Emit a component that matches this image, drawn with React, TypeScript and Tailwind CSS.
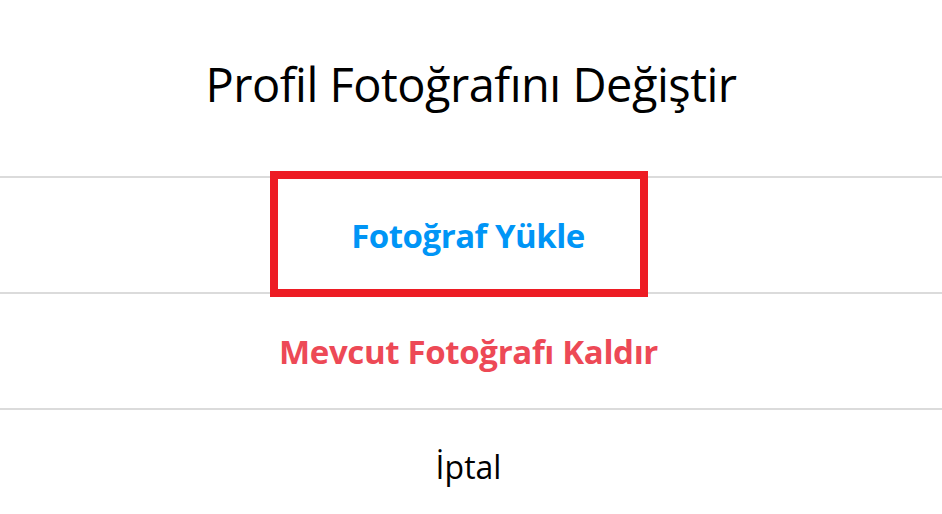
import React from "react";

export default function App() {
  const font = { fontFamily: '"Open Sans", "Noto Sans", sans-serif' };
  return (
    <div className="w-[942px] h-[514px] overflow-hidden bg-white" style={font}>
      <div className="h-[176px] flex items-center justify-center pb-[8px]">
        <h1 className="text-[47px] leading-none text-black font-normal tracking-[-0.5px]">
          Profil Fotoğrafını Değiştir
        </h1>
      </div>
      <div className="relative h-[116px] border-t-2 border-[#dbdbdb] flex items-center justify-center pr-[6px]">
        <span className="text-[33px] font-bold text-[#0095f6] leading-none tracking-[-0.5px]">
          Fotoğraf Yükle
        </span>
        <div className="absolute left-[270px] top-[-7px] w-[378px] h-[126px] border-[8px] border-[#ed1c24]" />
      </div>
      <div className="h-[116px] border-t-2 border-[#dbdbdb] flex items-center justify-center pr-[5px]">
        <span className="text-[33px] font-bold text-[#ed4956] leading-none tracking-[-0.35px]">
          Mevcut Fotoğrafı Kaldır
        </span>
      </div>
      <div className="h-[116px] border-t-2 border-[#dbdbdb] flex items-center justify-center pr-[5px]">
        <span className="text-[32px] text-black leading-none">İptal</span>
      </div>
    </div>
  );
}
